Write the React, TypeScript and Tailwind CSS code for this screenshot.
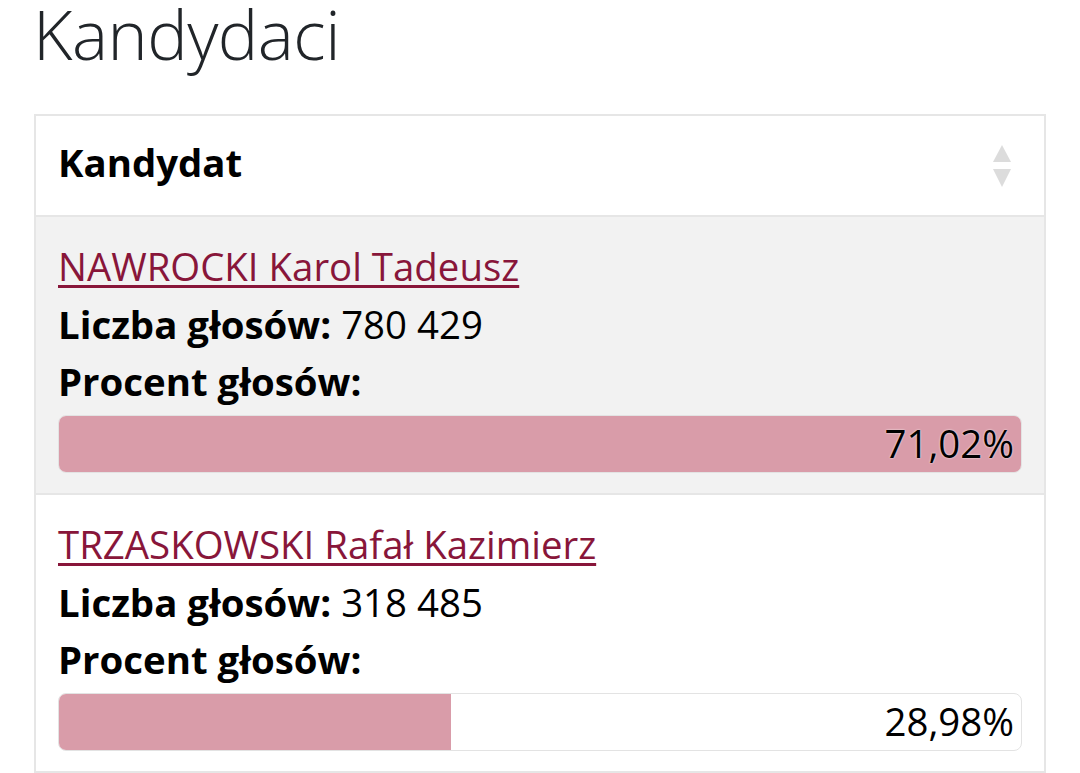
import React from "react";

const rows = [
  { name: "NAWROCKI Karol Tadeusz", votes: "780 429", pct: "71,02%", fill: 964, bg: "bg-[#f2f2f2]" },
  { name: "TRZASKOWSKI Rafał Kazimierz", votes: "318 485", pct: "28,98%", fill: 392, bg: "bg-white" },
];

export default function App() {
  return (
    <div className="w-[1080px] h-[773px] bg-white overflow-hidden" style={{ fontFamily: '"Open Sans", sans-serif' }}>
      <h1 className="pl-[33px] h-[114px] text-[68px] leading-[68px] font-light text-[#212529] tracking-[-0.5px]">
        Kandydaci
      </h1>
      <div className="ml-[34px] w-[1012px] border-2 border-[#e6e6e6] border-b-0">
        <div className="flex items-start justify-between pl-[22px] pr-[32px] pt-[18px] h-[101px] border-b-2 border-[#e6e6e6]">
          <div className="text-[38.4px] leading-[57.6px] font-bold text-black">Kandydat</div>
          <svg width="20" height="44" viewBox="0 0 20 44" className="mt-[11px]">
            <polygon points="10,0 19,17 1,17" fill="#dcdcdc" />
            <polygon points="1,24 19,24 10,42" fill="#dcdcdc" />
          </svg>
        </div>
        {rows.map((r, i) => (
          <div key={i} className={`${r.bg} h-[278px] pl-[22px] pr-[22px] pt-[21px] border-b-2 border-[#e6e6e6] text-[38.4px] leading-[57.6px] text-black`}>
            <a href="#" className="text-[#88163a] underline underline-offset-[4px] decoration-[3px]">{r.name}</a>
            <div><span className="font-bold">Liczba głosów:</span> {r.votes}</div>
            <div className="font-bold">Procent głosów:</div>
            <div className="relative mt-[4px] h-[58px] rounded-[8px] border border-[#e3e3e3] bg-white overflow-hidden">
              <div className="absolute left-0 top-0 bottom-0 bg-[#d99ca9]" style={{ width: r.fill }} />
              <div className="relative h-full flex items-center justify-end pr-[7px] [text-shadow:0_0_2px_#fff]">{r.pct}</div>
            </div>
          </div>
        ))}
      </div>
    </div>
  );
}
